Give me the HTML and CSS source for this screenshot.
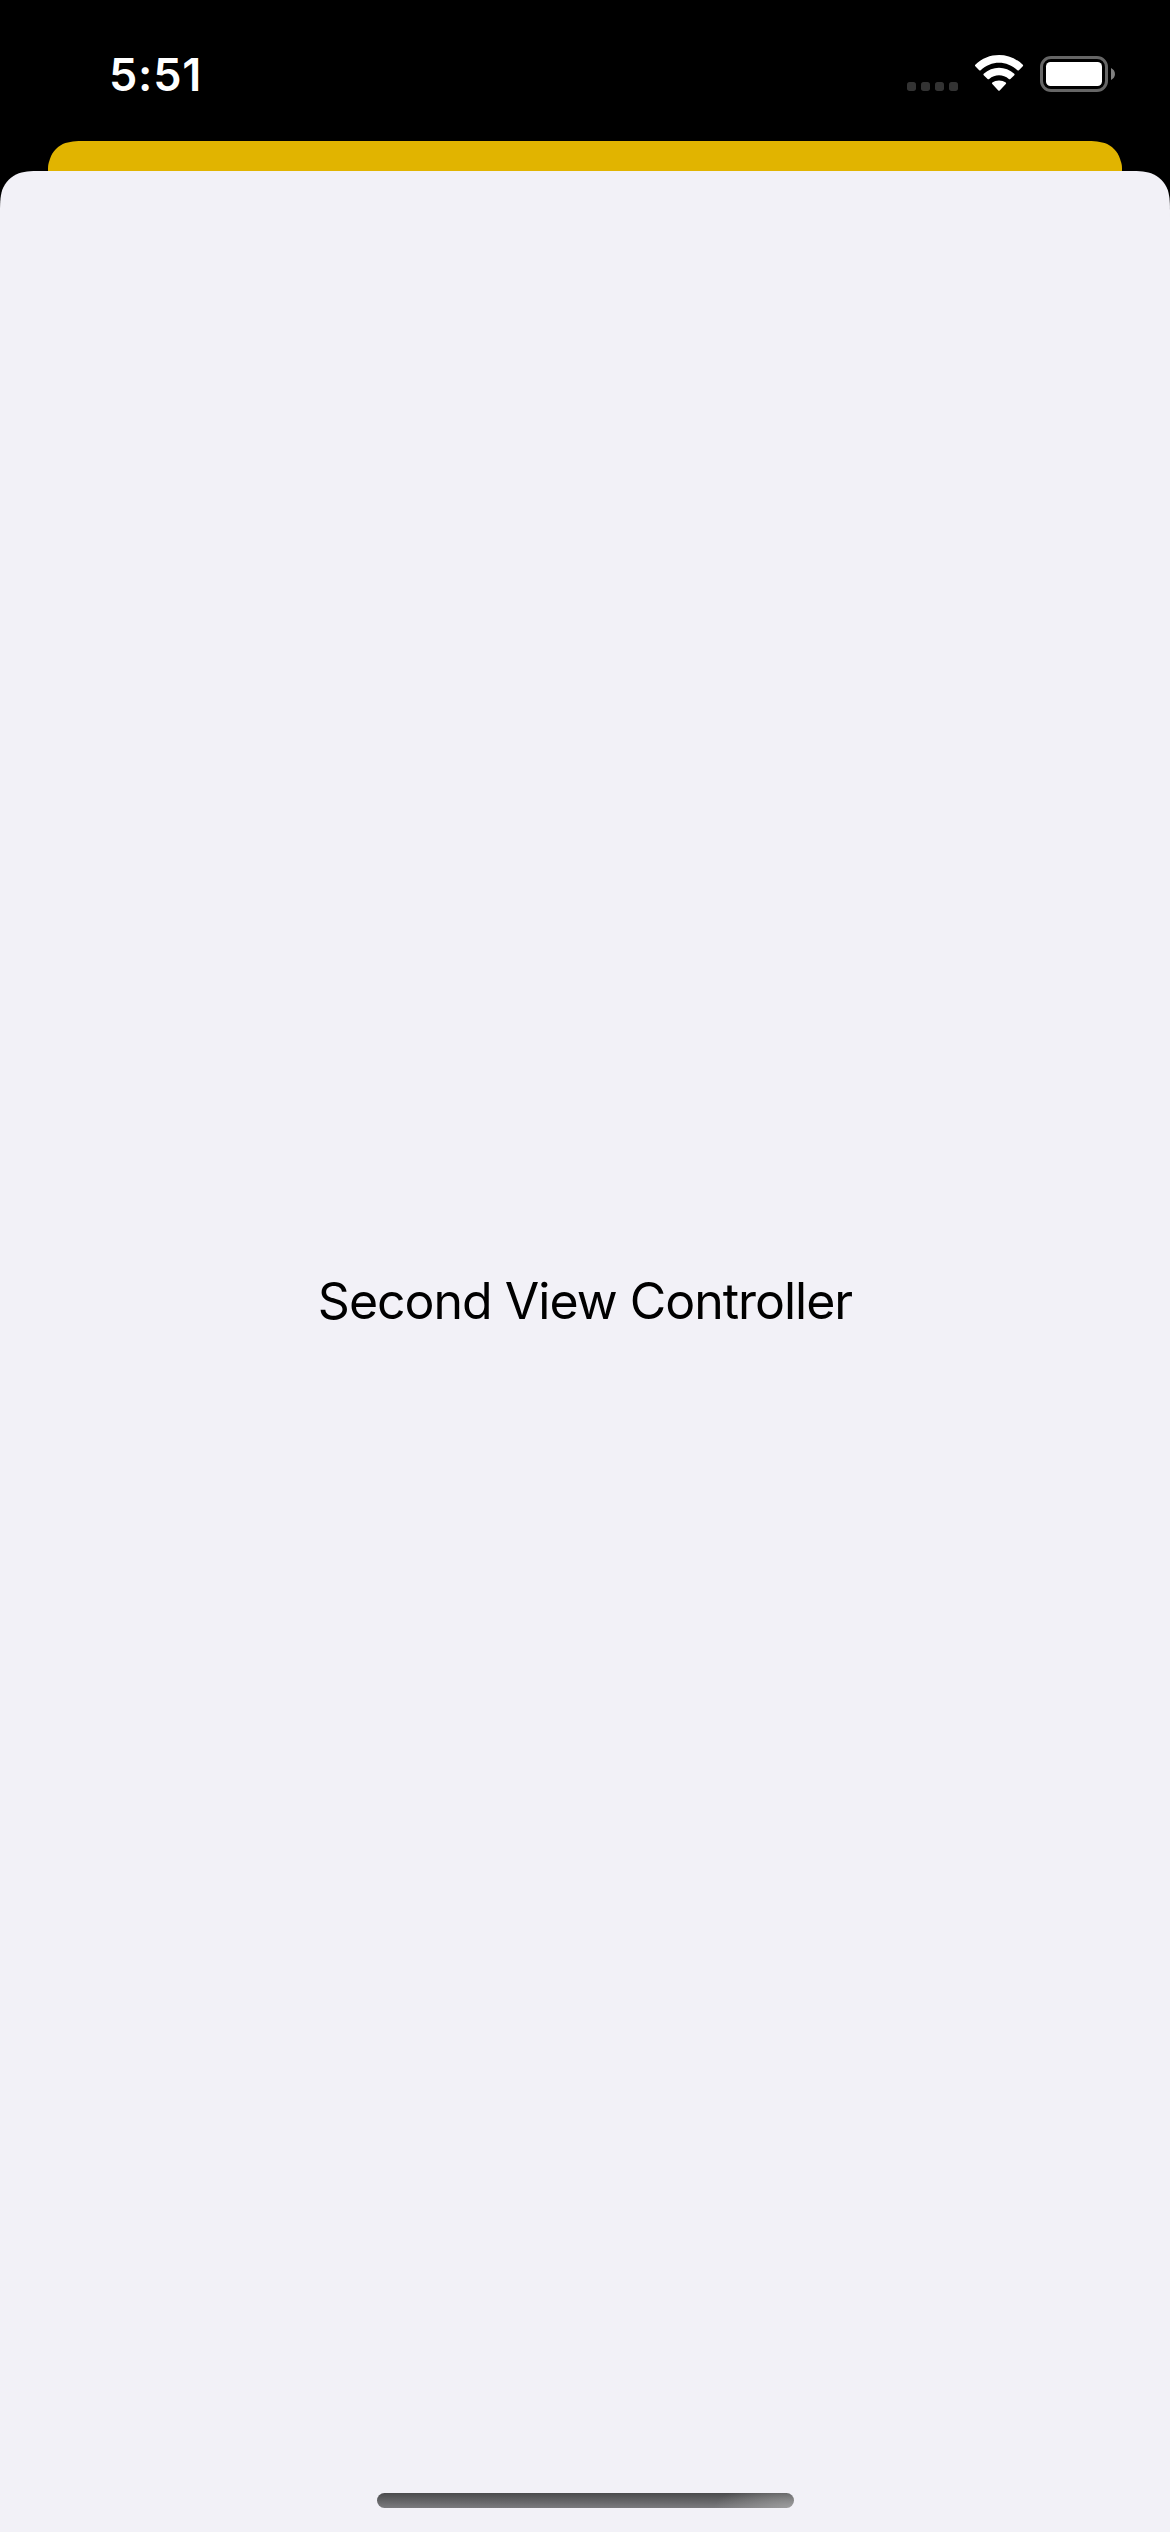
FILE: index.html
```html
<!DOCTYPE html>
<html lang="en">
<head>
<meta charset="utf-8">
<title>Second View Controller</title>
<link rel="stylesheet" href="styles.css">
</head>
<body>
<div class="screen">
  <header class="status-bar">
    <time class="clock">5:51</time>
    <svg class="status-icons" viewBox="0 0 240 70" width="240" height="70" aria-hidden="true">
      <g fill="#333">
        <rect x="17" y="42" width="9" height="9" rx="2.7"/>
        <rect x="31" y="42" width="9" height="9" rx="2.7"/>
        <rect x="45" y="42" width="9" height="9" rx="2.7"/>
        <rect x="59" y="42" width="9" height="9" rx="2.7"/>
      </g>
      <g fill="#fff">
        <path d="M85.3 24.8C98.5 11.8 119.5 11.8 132.8 24.8Q133.5 25.5 132.8 26.2L128.9 30.2Q128.2 30.9 127.4 30.2C117 20.2 101 20.2 90.7 30.2Q89.9 30.9 89.2 30.2L85.3 26.2Q84.6 25.5 85.3 24.8Z"/>
        <path d="M93.7 33.7C102.3 25.7 115.7 25.7 124.3 33.7Q125 34.4 124.3 35.2L120.4 39Q119.6 39.7 118.8 39C113.2 34 104.8 34 99.2 39Q98.4 39.7 97.6 39L93.7 35.2Q93 34.4 93.7 33.7Z"/>
        <path d="M102.3 42.6C106 39.9 112 39.9 115.8 42.6Q116.6 43.3 115.8 44L109.7 50.5Q109 51.2 108.3 50.5L102.3 44Q101.5 43.3 102.3 42.6Z"/>
      </g>
      <rect x="151.5" y="17.5" width="65" height="33" rx="9.5" fill="none" stroke="#666" stroke-width="3"/>
      <rect x="156" y="22" width="56" height="24" rx="4.5" fill="#fff"/>
      <path d="M221 28C226.3 30.5 226.3 37.5 221 40Z" fill="#808080"/>
    </svg>
  </header>
  <div class="presenting-view"></div>
  <main class="sheet">
    <h1 class="title">Second View Controller</h1>
    <div class="home-indicator"></div>
  </main>
</div>
</body>
</html>
```
FILE: styles.css
```css
body {
  margin: 0;
  background: #000;
  font-family: Inter, "Liberation Sans", sans-serif;
}

.screen {
  display: flex;
  flex-direction: column;
  width: 1170px;
  height: 2532px;
  overflow: hidden;
  background: #000;
}

.status-bar {
  display: flex;
  justify-content: space-between;
  align-items: flex-start;
  box-sizing: border-box;
  height: 141px;
  padding: 40px 40px 0 109px;
}

.clock {
  color: #fff;
  font-size: 45px;
  font-weight: 600;
  line-height: 70px;
  letter-spacing: 0.8px;
}

.status-icons {
  display: block;
}

.presenting-view {
  height: 30px;
  margin: 0 48px;
  background: #e1b400;
  clip-path: path("M0 30V29.9C0 23.9 0 23.9 2.1 17.4C4.6 10.3 10.3 4.6 17.4 2.1C23.9 0 29.9 0 42 0H1032C1044.1 0 1050.1 0 1056.6 2.1C1063.7 4.6 1069.4 10.3 1071.9 17.4C1074 23.9 1074 23.9 1074 29.9V30Z");
}

.sheet {
  display: flex;
  flex-direction: column;
  align-items: center;
  justify-content: space-between;
  box-sizing: border-box;
  flex: 1;
  padding: 1100px 0 24px;
  background: #f2f1f7;
  clip-path: path("M0 2361V45.9C0 32.7 0 26.1 2.2 18.9C5.1 11.2 11.2 5.1 18.9 2.2C26.1 0 32.7 0 45.9 0H1124.1C1137.3 0 1143.9 0 1151.1 2.2C1158.8 5.1 1164.9 11.2 1167.8 18.9C1170 26.1 1170 32.7 1170 45.9V2361Z");
}

.title {
  margin: 0;
  color: #000;
  font-size: 50px;
  font-weight: 400;
  line-height: 60px;
  letter-spacing: -1px;
  white-space: nowrap;
}

.home-indicator {
  width: 417px;
  height: 15px;
  border-radius: 7.5px;
  background:
    radial-gradient(ellipse 80px 26px at 100% 100%, rgba(170, 170, 170, 0.75), rgba(170, 170, 170, 0)),
    linear-gradient(#4b4b4d, #7b7b7e);
}
```
